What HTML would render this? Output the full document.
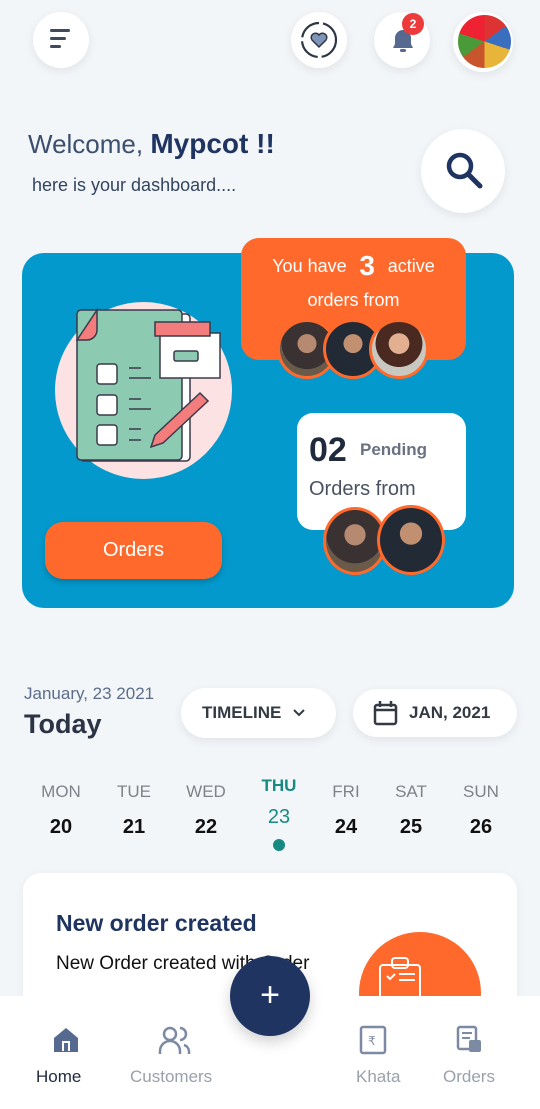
<!DOCTYPE html>
<html><head><meta charset="utf-8"><style>
*{margin:0;padding:0;box-sizing:border-box}
body{width:540px;height:1109px;background:#f3f6f9;font-family:"Liberation Sans",sans-serif;position:relative;overflow:hidden}
.a{position:absolute}
.circ{position:absolute;border-radius:50%;background:#fff;box-shadow:0 3px 10px rgba(0,0,0,.08)}
.av{position:absolute;width:60px;height:60px;border-radius:50%;border:3px solid #ff6a2c;background:radial-gradient(circle at 50% 40%,#b58a70 0 22%,#3a3232 23% 60%,#6a5a4a 61%)}
.day{position:absolute;width:60px;text-align:center}
.day .n{font-size:17px;color:#7f8389;}
.day .d{font-size:20px;font-weight:bold;color:#111;margin-top:14px}
.pill{position:absolute;background:#fff;border-radius:26px;box-shadow:0 3px 10px rgba(0,0,0,.08);font-weight:bold;color:#333a44;font-size:17px}
.nav{position:absolute;text-align:center;font-size:17px;color:#9aa1ab}
</style></head><body>
<div class="circ" style="left:33px;top:12px;width:56px;height:56px"></div>
<div class="a" style="left:50px;top:29px;width:20px;height:3px;background:#3f4a5a;border-radius:2px"></div>
<div class="a" style="left:50px;top:37px;width:16px;height:3px;background:#3f4a5a;border-radius:2px"></div>
<div class="a" style="left:50px;top:45px;width:11px;height:3px;background:#3f4a5a;border-radius:2px"></div>

<div class="circ" style="left:291px;top:12px;width:56px;height:56px"></div>
<svg class="a" style="left:297px;top:18px" width="44" height="44" viewBox="0 0 44 44"><circle cx="22" cy="22" r="17" fill="none" stroke="#2c3645" stroke-width="2.2" stroke-dasharray="24 4"/><path d="M22 29l-7-7a4 4 0 0 1 7-5a4 4 0 0 1 7 5z" fill="#7f95b8" stroke="#2c3645" stroke-width="1.5"/></svg>

<div class="circ" style="left:374px;top:12px;width:56px;height:56px"></div>
<svg class="a" style="left:390px;top:27px" width="26" height="28" viewBox="0 0 26 28"><path d="M3 21h20l-2-4v-6a8 8 0 0 0-16 0v6z" fill="#566a8f"/><rect x="10" y="22" width="6" height="3" rx="1.5" fill="#566a8f"/></svg>
<div class="a" style="left:402px;top:13px;width:22px;height:22px;border-radius:50%;background:#ed3a3a;color:#fff;font-size:12px;font-weight:bold;text-align:center;line-height:22px">2</div>

<div class="circ" style="left:453px;top:12px;width:60px;height:60px"></div>
<div class="a" style="left:458px;top:15px;width:53px;height:53px;border-radius:50%;background:conic-gradient(#d33 0 15%,#3a6fc0 15% 30%,#e8b43a 30% 50%,#c9552c 50% 65%,#4a9a3a 65% 80%,#e23 80%)"></div>

<div class="a" style="left:28px;top:128px;font-size:26px;color:#3c4f6e">Welcome, <span style="font-weight:bold;color:#1f3461;font-size:28px">Mypcot !!</span></div>
<div class="a" style="left:32px;top:175px;font-size:18px;color:#33445f">here is your dashboard....</div>
<div class="circ" style="left:421px;top:129px;width:84px;height:84px"></div>
<svg class="a" style="left:440px;top:147px" width="48" height="48" viewBox="0 0 48 48"><circle cx="20" cy="19" r="11" fill="none" stroke="#1f3461" stroke-width="4.5"/><path d="M28 27l12 12" stroke="#1f3461" stroke-width="5" stroke-linecap="round"/></svg>

<div class="a" style="left:22px;top:253px;width:492px;height:355px;background:#0399cc;border-radius:22px"></div>
<div class="a" style="left:55px;top:302px;width:177px;height:177px;border-radius:50%;background:#fde2e4"></div>
<svg class="a" style="left:55px;top:300px" width="180" height="180" viewBox="0 0 180 180">
<path d="M40 32h100v190H30V45z" transform="scale(1 .75)" fill="#fff" opacity="0"/>
<rect x="25" y="14" width="110" height="147" rx="4" fill="#fff" stroke="#3a3a4a" stroke-width="1.5"/>
<rect x="22" y="10" width="105" height="150" rx="4" fill="#8ccbb2" stroke="#3a3a4a" stroke-width="1.5"/>
<path d="M22 40L42 10v20a10 10 0 0 1-10 10z" fill="#f37c7c" stroke="#3a3a4a" stroke-width="1.5"/>
<rect x="105" y="33" width="60" height="45" fill="#fff" stroke="#3a3a4a" stroke-width="1.5"/>
<rect x="100" y="22" width="55" height="14" fill="#f37c7c" stroke="#3a3a4a" stroke-width="1.5"/>
<rect x="119" y="51" width="24" height="10" rx="2" fill="#8ccbb2" stroke="#3a3a4a" stroke-width="1.5"/>
<g fill="#fff" stroke="#3a3a4a" stroke-width="1.5"><rect x="42" y="64" width="20" height="20" rx="3"/><rect x="42" y="95" width="20" height="20" rx="3"/><rect x="42" y="125" width="20" height="20" rx="3"/></g>
<g stroke="#3a3a4a" stroke-width="1.5"><path d="M74 68h12M74 78h22M74 99h12M74 109h22M74 129h12M74 140h12"/></g>
<path d="M100 135l45-42 8 8-45 42-12 4z" fill="#f37c7c" stroke="#3a3a4a" stroke-width="1.5"/>
</svg>

<div class="a" style="left:45px;top:522px;width:177px;height:57px;background:#ff6a2c;border-radius:18px;color:#fff;font-size:20px;text-align:center;line-height:57px;box-shadow:0 3px 6px rgba(0,0,0,.2)">Orders</div>

<div class="a" style="left:241px;top:238px;width:225px;height:122px;background:#ff6a2c;border-radius:18px;color:#fff;text-align:center">
<div style="font-size:18px;margin-top:12px">You have <b style="font-size:28px;vertical-align:-3px">&nbsp;3&nbsp;</b> active</div>
<div style="font-size:18px;margin-top:8px">orders from</div></div>
<div class="av" style="left:277px;top:319px"></div>
<div class="av" style="left:323px;top:319px;background:radial-gradient(circle at 50% 40%,#c09070 0 22%,#222a35 23%)"></div>
<div class="av" style="left:369px;top:319px;background:radial-gradient(circle at 50% 40%,#e2b090 0 24%,#4a2a20 25% 55%,#c8c8c0 56%)"></div>

<div class="a" style="left:297px;top:413px;width:169px;height:117px;background:#fff;border-radius:16px">
<div style="position:absolute;left:12px;top:18px;font-size:34px;font-weight:bold;color:#1f2a3d">02</div>
<div style="position:absolute;left:63px;top:27px;font-size:17px;font-weight:bold;color:#6a7282">Pending</div>
<div style="position:absolute;left:12px;top:65px;font-size:20px;color:#4a5262">Orders from</div></div>
<div class="av" style="left:323px;top:507px;width:64px;height:68px"></div>
<div class="av" style="left:377px;top:505px;width:68px;height:70px;background:radial-gradient(circle at 50% 40%,#c09070 0 22%,#222a35 23%)"></div>

<div class="a" style="left:24px;top:684px;font-size:17px;color:#5b6d8a">January, 23 2021</div>
<div class="a" style="left:24px;top:709px;font-size:27px;font-weight:bold;color:#2a3445">Today</div>
<div class="pill" style="left:181px;top:688px;width:155px;height:50px;line-height:50px;padding-left:21px">TIMELINE <svg width="14" height="10" style="margin-left:6px" viewBox="0 0 14 10"><path d="M2 2l5 5 5-5" fill="none" stroke="#333a44" stroke-width="2"/></svg></div>
<div class="pill" style="left:353px;top:689px;width:164px;height:48px;line-height:48px;padding-left:56px">JAN, 2021</div>
<svg class="a" style="left:373px;top:700px" width="25" height="26" viewBox="0 0 25 26"><rect x="2" y="5" width="21" height="19" rx="2" fill="none" stroke="#333a44" stroke-width="2.5"/><path d="M2 10h21M7 1v6M18 1v6" stroke="#333a44" stroke-width="2.5"/></svg>

<div class="day" style="left:31px;top:782px"><div class="n">MON</div><div class="d">20</div></div>
<div class="day" style="left:104px;top:782px"><div class="n">TUE</div><div class="d">21</div></div>
<div class="day" style="left:176px;top:782px"><div class="n">WED</div><div class="d">22</div></div>
<div class="day" style="left:249px;top:776px"><div class="n" style="color:#178a7f;font-weight:bold">THU</div><div class="d" style="color:#178a7f;font-weight:normal;margin-top:10px">23</div></div>
<div class="a" style="left:273px;top:839px;width:12px;height:12px;border-radius:50%;background:#178a7f"></div>
<div class="day" style="left:316px;top:782px"><div class="n">FRI</div><div class="d">24</div></div>
<div class="day" style="left:381px;top:782px"><div class="n">SAT</div><div class="d">25</div></div>
<div class="day" style="left:451px;top:782px"><div class="n">SUN</div><div class="d">26</div></div>

<div class="a" style="left:23px;top:873px;width:494px;height:200px;background:#fff;border-radius:18px;box-shadow:0 2px 10px rgba(0,0,0,.05)"></div>
<div class="a" style="left:56px;top:910px;font-size:23px;font-weight:bold;color:#1f3461">New order created</div>
<div class="a" style="left:56px;top:953px;font-size:19px;color:#111">New Order created with Order</div>
<div class="a" style="left:359px;top:932px;width:122px;height:122px;border-radius:50%;background:#ff6a2c"></div>
<svg class="a" style="left:372px;top:950px" width="70" height="50" viewBox="0 0 70 50"><rect x="8" y="15" width="40" height="40" rx="3" fill="none" stroke="#fff" stroke-width="2"/><rect x="20" y="8" width="16" height="10" rx="3" fill="none" stroke="#fff" stroke-width="2"/><path d="M15 26l3 3 5-5M27 24h16M27 30h16" stroke="#fff" stroke-width="2" fill="none"/></svg>

<div class="a" style="left:0;top:996px;width:540px;height:113px;background:#fff"></div>
<div class="a" style="left:230px;top:956px;width:80px;height:80px;border-radius:50%;background:#1f3461;box-shadow:0 6px 14px rgba(0,0,0,.18);color:#fff;font-size:34px;text-align:center;line-height:78px">+</div>
<svg class="a" style="left:51px;top:1025px" width="30" height="30" viewBox="0 0 30 30"><path d="M3 13L15 3l12 10v14H3z" fill="#566a8f"/><rect x="11" y="16" width="8" height="10" fill="#fff"/><rect x="13" y="18" width="4" height="9" fill="#566a8f"/></svg>
<div class="nav" style="left:36px;top:1067px;color:#1f2a3d">Home</div>
<svg class="a" style="left:158px;top:1025px" width="34" height="30" viewBox="0 0 34 30"><circle cx="12" cy="9" r="6" fill="none" stroke="#7d8aa3" stroke-width="2.5"/><path d="M2 29v-3a8 8 0 0 1 20 0v3M22 3a6 6 0 0 1 0 12M26 20a7 7 0 0 1 5 6v3" fill="none" stroke="#7d8aa3" stroke-width="2.5"/></svg>
<div class="nav" style="left:130px;top:1067px">Customers</div>
<svg class="a" style="left:353px;top:1025px" width="40" height="30" viewBox="0 0 40 30"><rect x="8" y="2" width="24" height="26" rx="2" fill="none" stroke="#7d8aa3" stroke-width="2.5"/><text x="15" y="20" font-size="12" fill="#7d8aa3" font-family="DejaVu Sans">₹</text></svg>
<div class="nav" style="left:356px;top:1067px">Khata</div>
<svg class="a" style="left:455px;top:1024px" width="30" height="32" viewBox="0 0 30 32"><rect x="3" y="3" width="18" height="22" rx="2" fill="none" stroke="#7d8aa3" stroke-width="2.5"/><path d="M7 9h10M7 14h8" stroke="#7d8aa3" stroke-width="2"/><rect x="14" y="16" width="12" height="12" rx="2" fill="#7d8aa3"/></svg>
<div class="nav" style="left:443px;top:1067px">Orders</div>
</body></html>
